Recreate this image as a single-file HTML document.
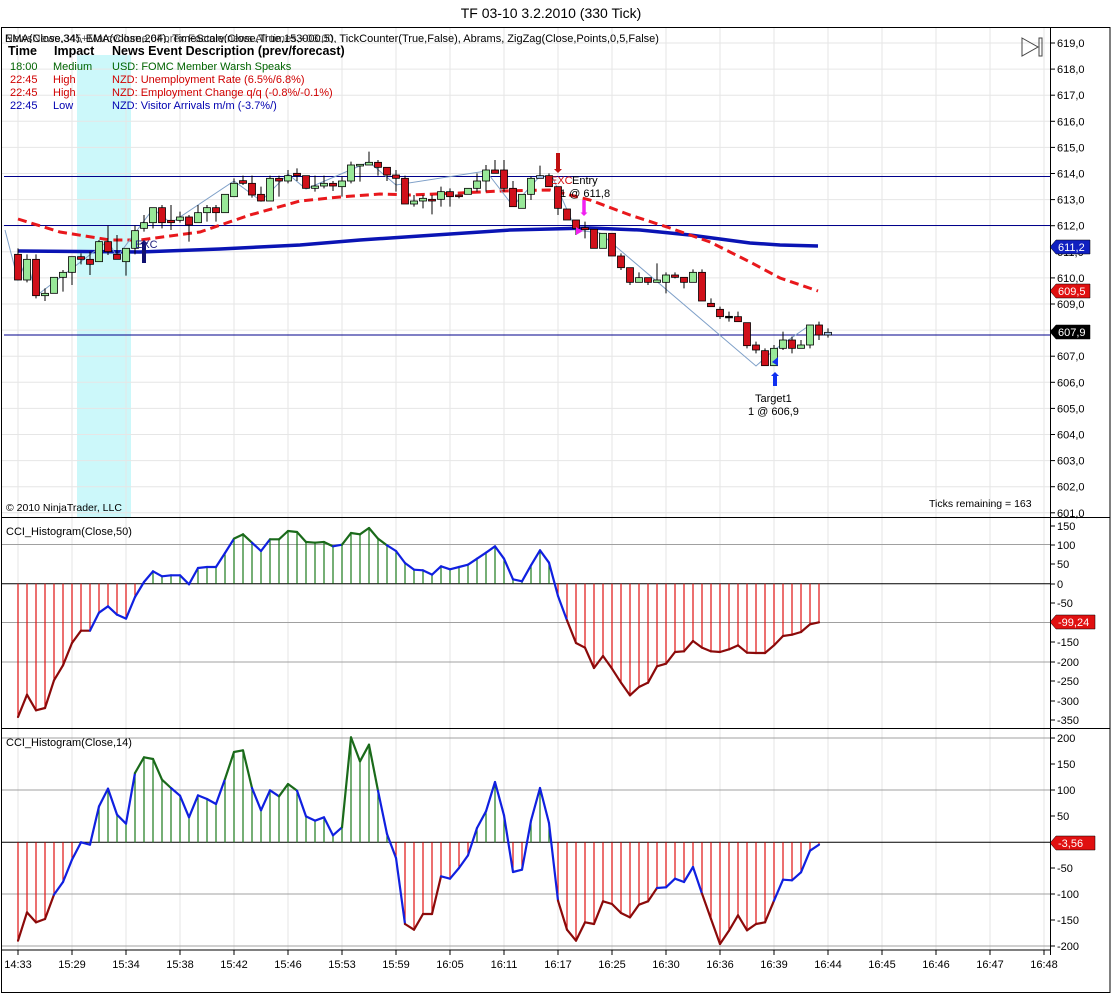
<!DOCTYPE html>
<html><head><meta charset="utf-8">
<style>
html,body{margin:0;padding:0;background:#fff;}
body{width:1112px;height:994px;overflow:hidden;}
svg text{font-family:"Liberation Sans",Arial,sans-serif;}
</style></head>
<body>
<svg id="s" width="1112" height="994" xmlns="http://www.w3.org/2000/svg" style="display:block">
</svg>
<script>
const S=document.getElementById('s');
let h='';
const X=i=>18+9*i;
const PY=p=>43+26.1*(619-p);
// frame
h+='<rect x="0" y="0" width="1112" height="994" fill="#fff"/>';
h+='<text x="551" y="18" font-size="14" text-anchor="middle" fill="#000">TF 03-10  3.2.2010 (330 Tick)</text>';
// cyan band
h+='<rect x="77" y="55" width="54" height="462" fill="#ccf8fa"/>';
// vertical grid
for(let k=0;k<20;k++){const x=18+54*k;h+=`<line x1="${x}" y1="28" x2="${x}" y2="950" stroke="#e6e6e6" stroke-width="1"/>`;}
// price grid
for(let p=601;p<=619;p++){const y=PY(p);h+=`<line x1="2" y1="${y}" x2="1050" y2="${y}" stroke="#e6e6e6"/>`;h+=`<line x1="1050" y1="${y}" x2="1055" y2="${y}" stroke="#000"/>`;h+=`<text x="1057" y="${y+4}" font-size="11">${p},0</text>`;}
// horizontal blue lines
[176.5,225.5,335].forEach(y=>h+=`<line x1="4" y1="${y}" x2="1050" y2="${y}" stroke="#00008b" stroke-width="1"/>`);
// MAs
const red=[[18,219],[60,232],[110,240],[140,240],[200,232],[250,215],[300,201],[340,197],[380,194],[410,195],[460,193],[500,191],[550,190],[590,200],[630,215],[670,228],[710,242],[750,262],[780,278],[818,291]];
const blue=[[18,251],[140,252],[220,249],[300,245],[360,240],[420,236],[510,230],[590,228],[640,230],[690,235],[750,243],[780,245],[818,246]];
const pl=a=>a.map(p=>p.join(',')).join(' ');
h+=`<polyline points="${pl(blue)}" fill="none" stroke="#0a14b4" stroke-width="3.5"/>`;
h+=`<polyline points="${pl(red)}" fill="none" stroke="#e8181c" stroke-width="3" stroke-dasharray="9,5"/>`;
// zigzag
const zz=[[5,230],[18,280],[27,259],[36,296],[108,241],[117,257],[153,209],[171,223],[234,181],[261,201],[288,174],[306,189],[369,162],[396,185],[486,171],[513,206],[540,176],[552,176],[576,230],[600,233],[756,366],[774,350],[810,325]];
h+=`<polyline points="${pl(zz)}" fill="none" stroke="#7fa0c8" stroke-width="1"/>`;
// candles: [bodyTop,bodyBot,wickTop,wickBot,color] in zoom py; y=145+py/3
const C=[[328,405,310,405,'r'],[343,405,328,412,'g'],[343,452,328,460,'r'],[445,452,430,468,'g'],[397,445,397,445,'g'],[382,397,375,440,'g'],[335,382,335,420,'g'],[335,343,325,358,'r'],[343,358,320,390,'r'],[290,350,285,350,'g'],
[290,320,242,330,'r'],[328,343,270,343,'r'],[310,350,310,392,'g'],[257,310,242,328,'g'],[233,250,210,260,'g'],[188,233,188,250,'g'],[188,233,180,250,'r'],[226,233,180,255,'r'],[216,226,200,233,'g'],[216,240,210,290,'r'],
[203,233,180,233,'g'],[188,203,180,230,'g'],[188,203,180,230,'r'],[148,203,148,203,'g'],[115,155,100,155,'g'],[107,115,92,120,'r'],[115,150,92,158,'r'],[148,168,125,170,'r'],[100,168,92,168,'g'],[100,108,92,155,'r'],
[92,108,75,115,'g'],[85,92,70,108,'r'],[92,130,92,130,'r'],[123,130,92,140,'g'],[115,123,92,130,'g'],[115,123,108,138,'r'],[108,125,95,155,'g'],[60,108,50,115,'g'],[58,63,60,110,'g'],[52,60,20,60,'g'],
[52,67,45,92,'r'],[67,90,67,108,'r'],[90,100,75,140,'r'],[100,177,92,177,'r'],[168,177,150,185,'g'],[160,168,150,190,'g'],[163,168,150,208,'r'],[140,163,125,185,'g'],[140,155,130,185,'r'],[150,155,150,160,'r'],
[130,148,130,148,'g'],[108,130,85,140,'g'],[75,108,60,140,'g'],[75,85,45,85,'r'],[75,130,45,140,'r'],[130,185,108,185,'r'],[148,190,148,190,'g'],[100,148,95,165,'g'],[92,100,62,100,'b'],[92,125,85,125,'r'],
[125,190,125,210,'r'],[192,225,192,225,'r'],[225,250,225,270,'r'],[248,254,230,280,'r'],[253,310,253,310,'r'],[265,310,265,310,'g'],[265,333,265,333,'r'],[333,368,325,375,'r'],[368,412,368,420,'r'],[398,412,382,412,'g'],
[398,412,398,420,'r'],[405,412,355,412,'g'],[390,412,382,445,'g'],[390,397,382,400,'r'],[397,412,397,430,'r'],[382,412,373,412,'g'],[382,468,373,468,'r'],[475,485,460,485,'r'],[493,515,485,522,'r'],[514,516,500,530,'k'],
[515,530,500,530,'r'],[533,602,533,610,'r'],[600,615,590,625,'r'],[617,662,610,662,'r'],[610,662,600,662,'g'],[585,610,560,615,'g'],[585,610,575,625,'r'],[600,610,585,610,'g'],[540,600,540,610,'g'],[540,570,530,585,'r'],[562,570,550,578,'b']];
const col={r:'#d0101a',g:'#98e898',b:'#a8c8f0',k:'#000'};
C.forEach((c,i)=>{const x=X(i);const Y=v=>145+v/3;const bt=Y(c[0]),bb=Y(c[1]);
h+=`<line x1="${x}" y1="${Y(c[2])}" x2="${x}" y2="${Math.max(Y(c[3]),bb)}" stroke="#000"/>`;
h+=`<rect x="${x-3.5}" y="${bt}" width="7" height="${Math.max(bb-bt,1.5)}" fill="${col[c[4]]}" stroke="#000" stroke-width="0.8"/>`;});
// arrows
const up=(x,y1,y2,c,w)=>`<path d="M${x-w} ${y1+w} L${x} ${y1} L${x+w} ${y1+w} L${x+w/2} ${y1+w} L${x+w/2} ${y2} L${x-w/2} ${y2} L${x-w/2} ${y1+w} Z" fill="${c}"/>`;
const dn=(x,y1,y2,c,w)=>`<path d="M${x-w} ${y2-w} L${x} ${y2} L${x+w} ${y2-w} L${x+w/2} ${y2-w} L${x+w/2} ${y1} L${x-w/2} ${y1} L${x-w/2} ${y2-w} Z" fill="${c}"/>`;
h+=up(144,240,263,'#101070',4);
h+=dn(558,153,173,'#c01010',4);
h+=dn(584,200,216,'#f020f0',3.5);
h+=up(775,372,386,'#1030f0',4);
h+='<path d="M576 227 L583 231 L576 235Z" fill="#f020f0"/><path d="M778 357 L772 362 L778 366Z" fill="#1030f0"/>';
h+='<text x="135" y="248" font-size="11" fill="#202080">EXC</text>';
h+='<text x="550" y="184" font-size="11" fill="#d01010">EXC</text><text x="572" y="184" font-size="11">Entry</text><text x="560" y="197" font-size="11">1 @ 611,8</text>';
h+='<text x="755" y="402" font-size="11">Target1</text><text x="748" y="415" font-size="11">1 @ 606,9</text>';
h+='<text x="6" y="511" font-size="10.5">© 2010 NinjaTrader, LLC</text><text x="929" y="507" font-size="10.5">Ticks remaining = 163</text>';
// header
h+='<text x="5" y="42" font-size="11">EMA(Close,34), EMA(Close,204), TimeScale(Close,True,153000,5), TickCounter(True,False),  Abrams,  ZigZag(Close,Points,0,5,False)</text>';
h+='<text x="5" y="42" font-size="11" opacity="0.7">NewsNews,345+Marcvolume,6Forex Factory,news   All times,+03:00</text>';
h+='<rect x="8" y="43" width="350" height="12" fill="#fff"/>';
h+='<text x="8" y="55" font-size="12.5" font-weight="bold">Time</text><text x="54" y="55" font-size="12.5" font-weight="bold">Impact</text><text x="112" y="55" font-size="12.5" font-weight="bold">News Event Description (prev/forecast)</text>';
const rows=[['18:00','Medium','USD: FOMC Member Warsh Speaks','#006400'],['22:45','High','NZD: Unemployment Rate (6.5%/6.8%)','#d00000'],['22:45','High','NZD: Employment Change q/q (-0.8%/-0.1%)','#d00000'],['22:45','Low','NZD: Visitor Arrivals m/m (-3.7%/)','#0000b0']];
rows.forEach((r,k)=>{const y=70+13*k;h+=`<text x="10" y="${y}" font-size="11" fill="${r[3]}">${r[0]}</text><text x="53" y="${y}" font-size="11" fill="${r[3]}">${r[1]}</text><text x="112" y="${y}" font-size="11" fill="${r[3]}">${r[2]}</text>`;});
// icon
h+='<path d="M1022 38 L1038 47 L1022 56 Z" fill="none" stroke="#444" stroke-width="1"/><rect x="1039" y="38" width="3" height="18" fill="none" stroke="#444"/>';
// tags
const tag=(y,t,c)=>`<path d="M1050 ${y} L1056 ${y-7} L1090 ${y-7} L1090 ${y+7} L1056 ${y+7} Z" fill="${c}" stroke="#000" stroke-width="0.5"/><text x="1058" y="${y+4}" font-size="11" fill="#fff">${t}</text>`;
h+=`<rect x="1051" y="240" width="45" height="14" fill="#fff"/>`;
h+=tag(247,'611,2','#1020c0')+tag(291,'609,5','#e01010')+tag(332,'607,9','#000');
// CCI panels
function panel(top,zero,scale,grids,labels,pys,t100,tm100,tagv,tagy,title,oy){
 grids.forEach(y=>h+=`<line x1="2" y1="${y}" x2="1050" y2="${y}" stroke="#a0a0a0"/>`);
 h+=`<line x1="2" y1="${zero}" x2="1050" y2="${zero}" stroke="#000"/>`;
 labels.forEach(l=>{h+=`<line x1="1050" y1="${l[1]}" x2="1055" y2="${l[1]}" stroke="#000"/><text x="1057" y="${l[1]+4}" font-size="11">${l[0]}</text>`;});
 const ys=pys.map(p=>oy+p/3);
 ys.forEach((y,i)=>{const x=X(i);h+=`<line x1="${x}" y1="${zero}" x2="${x}" y2="${y}" stroke="${y<zero?'#1a7a1a':'#e01010'}" stroke-width="1.2"/>`;});
 for(let i=0;i<ys.length-1;i++){const m=(pys[i]+pys[i+1])/2;const c=m<t100?'#1a6a1a':(m>tm100?'#8b0a0a':'#1020e0');
  h+=`<line x1="${X(i)}" y1="${ys[i]}" x2="${X(i+1)}" y2="${ys[i+1]}" stroke="${c}" stroke-width="2.2" stroke-linecap="round"/>`;}
 h+=`<text x="6" y="${top+18}" font-size="11">${title}</text>`;
 h+=`<path d="M1050 ${tagy} L1056 ${tagy-7} L1095 ${tagy-7} L1095 ${tagy+7} L1056 ${tagy+7} Z" fill="#e01010" stroke="#000" stroke-width="0.5"/><text x="1058" y="${tagy+4}" font-size="11" fill="#fff">${tagv}</text>`;
}
const p2=[600,533,580,573,490,445,378,341,341,287,268,293,305,240,195,163,178,175,175,202,153,150,150,108,65,52,77,102,67,67,42,45,75,77,75,88,83,48,52,33,65,85,102,138,158,160,173,148,157,150,143,125,107,88,125,187,193,145,100,137,237,310,378,392,453,417,455,497,535,510,497,448,440,405,403,372,392,403,405,397,385,407,408,408,385,357,353,345,322,316];
panel(517,583.7,0.39,[544.5,622.5,662],[['150',526],['100',545],['50',564],['0',584],['-50',603],['-150',642],['-200',662],['-250',681],['-300',701],['-350',720]],p2,82,316,'-99,24',622,'CCI_Histogram(Close,50)',517);
const p3=[638,553,583,573,500,462,395,343,350,235,182,260,287,135,88,93,155,180,203,268,202,213,228,153,72,67,180,247,187,205,168,188,265,278,268,322,298,28,100,50,188,318,390,588,605,558,558,445,452,420,382,300,250,162,262,432,425,278,180,285,518,605,638,583,588,520,528,555,568,530,520,480,478,452,462,417,497,573,648,608,562,607,588,583,518,455,457,433,368,350];
panel(728,842.3,0.26,[738,790,894,946],[['200',738],['150',764],['100',790],['50',816],['-50',868],['-100',894],['-150',920],['-200',946]],p3,187,499,'-3,56',843,'CCI_Histogram(Close,14)',728);
// time axis
h+='<line x1="2" y1="950" x2="1050" y2="950" stroke="#000"/>';
const T=['14:33','15:29','15:34','15:38','15:42','15:46','15:53','15:59','16:05','16:11','16:17','16:25','16:30','16:36','16:39','16:44','16:45','16:46','16:47','16:48'];
T.forEach((t,k)=>{const x=18+54*k;h+=`<line x1="${x}" y1="950" x2="${x}" y2="955" stroke="#000"/><text x="${x}" y="968" font-size="11" text-anchor="middle">${t}</text>`;});
// borders
h+='<rect x="1.5" y="27.5" width="1108.5" height="965" fill="none" stroke="#000"/>';
h+='<line x1="1" y1="517.5" x2="1110" y2="517.5" stroke="#000"/><line x1="1" y1="728.5" x2="1110" y2="728.5" stroke="#000"/>';
h+='<line x1="1050.5" y1="28" x2="1050.5" y2="955" stroke="#000"/>';
S.innerHTML=h;
</script>
</body></html>
